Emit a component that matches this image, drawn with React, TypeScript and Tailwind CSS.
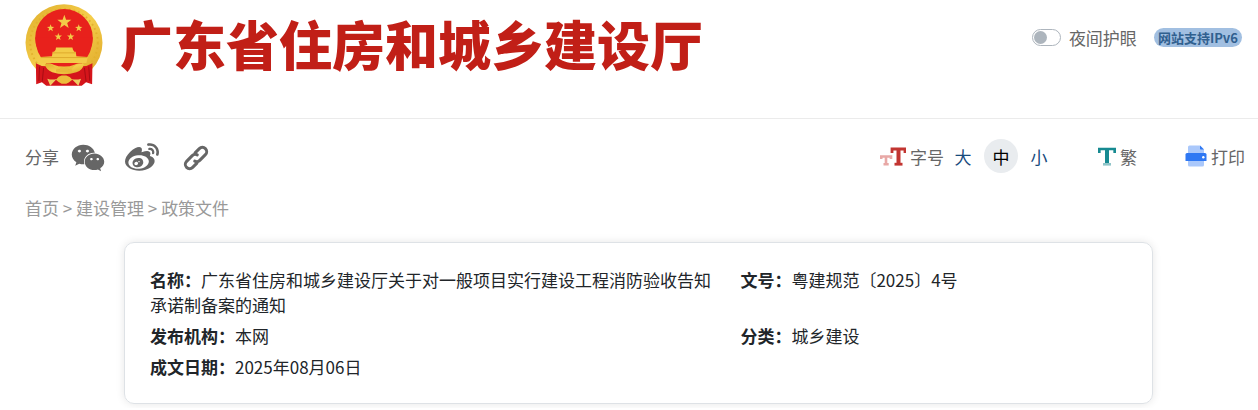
import { useState } from "react";
import { FaWeibo, FaWeixin } from "react-icons/fa";

const sizes = ["大", "中", "小"];

const crumbs = ["首页", "建设管理", "政策文件"];

const info = [
  { label: "名称：", value: "广东省住房和城乡建设厅关于对一般项目实行建设工程消防验收告知承诺制备案的通知" },
  { label: "文号：", value: "粤建规范〔2025〕4号" },
  { label: "发布机构：", value: "本网" },
  { label: "分类：", value: "城乡建设" },
  { label: "成文日期：", value: "2025年08月06日" },
];

const STAR = "M0 -10 L2.4 -3.2 L9.5 -3.1 L3.9 1.3 L5.9 8.1 L0 4.1 L-5.9 8.1 L-3.9 1.3 L-9.5 -3.1 L-2.4 -3.2Z";
const LINK = "M3 -4.3 H9 a4.3 4.3 0 0 1 0 8.6 H1 a4.3 4.3 0 0 1 -4.1 -3";

function Emblem() {
  return (
    <svg viewBox="45 10 232 248" className="h-[83px] w-[78px] shrink-0" role="img" aria-label="国徽">
      <defs>
        <linearGradient id="gold" x1="0" y1="0" x2="1" y2="1">
          <stop offset="0" stopColor="#dfae2c" />
          <stop offset="0.5" stopColor="#f5ce4b" />
          <stop offset="1" stopColor="#dda526" />
        </linearGradient>
      </defs>
      <circle cx="161" cy="126" r="115" fill="url(#gold)" />
      <circle cx="161" cy="126" r="101" fill="none" stroke="#e3b12d" strokeWidth="6" strokeDasharray="5 9" />
      <circle cx="161" cy="111" r="86" fill="#e8211c" />
      <path d="M75 110 Q76 160 108 188 L214 188 Q246 160 247 110Z" fill="#e8211c" />
      <g fill="#f3cb48">
        <path d={STAR} transform="translate(162 64) scale(2.2)" />
        <path d={STAR} transform="translate(121 82) scale(1.15)" />
        <path d={STAR} transform="translate(205 82) scale(1.15)" />
        <path d={STAR} transform="translate(144 108) scale(1.15)" />
        <path d={STAR} transform="translate(181 108) scale(1.15)" />
        <path d="M137 140 L186 140 L188 147 L193 155 L130 155 L136 147Z" />
        <path d="M127 153 L196 153 L198 166 L232 168 L228 186 L94 186 L90 168 L125 166Z" />
      </g>
      <path d="M127 156 H196 M92 170 H230" stroke="#d39b20" strokeWidth="2" />
      <path d="M77 187 Q92 197 111 196 Q128 206 161 207 Q194 206 212 196 Q230 197 246 187 L245 250 L227 244 L214 254 L108 254 L95 244 L78 250Z" fill="#d5151b" />
      <path d="M88 197 L86 240 M100 201 L96 242 M222 201 L227 242 M235 197 L238 240" stroke="#a90d14" strokeWidth="3" />
      <path d="M104 189 Q124 184 137 203 Q161 219 185 203 Q200 184 220 189 Q218 207 198 214 Q161 226 126 214 Q107 206 104 189Z" fill="url(#gold)" />
      <path d="M138 214 Q134 200 147 205 Q151 194 161 201 Q171 194 175 205 Q188 200 184 214Z" fill="#e9b939" />
      <path d="M137 236 L145 227 L154 224 L168 224 L178 228 L186 236 L176 244 L168 248 L154 248 L145 243Z" fill="#edbd3c" />
      <path d="M111 233 Q125 238 139 234 L120 254Z M212 233 Q198 238 184 234 L204 254Z" fill="#f0cb60" />
    </svg>
  );
}

function ChainIcon() {
  return (
    <svg viewBox="-13 -13 26 26" className="h-[26px] w-[26px]" fill="none" stroke="#666" strokeWidth="3" strokeLinecap="round" aria-hidden="true">
      <path d={LINK} transform="rotate(-45)" />
      <path d={LINK} transform="rotate(135)" />
    </svg>
  );
}

function FontSizeIcon() {
  return (
    <svg viewBox="0 0 26 19" className="h-[19px] w-[26px]" fill="none" aria-hidden="true">
      <path d="M1.2 12 V9.5 H11 V12 M6 9.5 V17 M3.5 17.2 H8.7" stroke="#e8a8a6" strokeWidth="2.6" />
      <path d="M12 6 V2 H25 V6" stroke="#c23531" strokeWidth="2.8" />
      <path d="M18.5 2 V17" stroke="#c23531" strokeWidth="4" />
      <path d="M14.5 17.2 H22.5" stroke="#c23531" strokeWidth="2.8" />
    </svg>
  );
}

function TraditionalIcon() {
  return (
    <svg viewBox="0 0 18 19" className="h-[19px] w-[18px]" fill="none" aria-hidden="true">
      <path d="M1.3 6 V2 H16.7 V6" stroke="#178a91" strokeWidth="2.7" />
      <path d="M9 2 V16" stroke="#178a91" strokeWidth="4" />
      <path d="M5 17.3 H13" stroke="#90c5c9" strokeWidth="2.6" />
    </svg>
  );
}

function PrintIcon() {
  return (
    <svg viewBox="0 0 22 22" className="h-[22px] w-[22px]" aria-hidden="true">
      <path d="M4.5 0.5 H15 L19 4.5 V10 H3 V2 Q3 0.5 4.5 0.5Z" fill="#aac8fb" />
      <path d="M15 0.5 L19 4.5 H15.8 Q15 4.5 15 3.7Z" fill="#2f78f3" />
      <path d="M2 8 H20 Q21.5 8 21.5 9.5 V16 H0.5 V9.5 Q0.5 8 2 8Z" fill="#2f78f3" />
      <path d="M3 16 H19 V20 Q19 21.5 17.5 21.5 H4.5 Q3 21.5 3 20Z" fill="#aac8fb" />
      <circle cx="18.3" cy="12.3" r="1.2" fill="#fff" />
    </svg>
  );
}

export default function App() {
  const [night, setNight] = useState(false);
  const [size, setSize] = useState("中");

  return (
    <div className="bg-white pb-1 font-['Noto_Sans_CJK_SC',sans-serif] text-[17px] leading-[25px] text-[#212529]">
      <header className="flex h-[119px] items-start justify-between border-b border-[#ebebeb] pr-4 pl-[25px]">
        <div className="flex items-start gap-[17px] pt-1">
          <Emblem />
          <h1 className="text-[53px] leading-[78px] font-black whitespace-nowrap text-[#c11f17]">广东省住房和城乡建设厅</h1>
        </div>
        <div className="flex items-center gap-[17px] pt-[25px] whitespace-nowrap">
          <label className="flex items-center gap-2 text-[#666]">
            <input
              type="checkbox"
              checked={night}
              onChange={() => setNight(!night)}
              className="flex h-[17px] w-[29px] appearance-none items-center rounded-full border border-[#adb5bd] bg-white px-px before:h-[13px] before:w-[13px] before:rounded-full before:bg-[#adb5bd] checked:justify-end"
            />
            夜间护眼
          </label>
          <a href="#ipv6" className="rounded-full bg-[#a1bfe1] px-1 text-[13px] leading-[19px] font-bold text-[#30608f]">
            网站支持IPv6
          </a>
        </div>
      </header>

      <div className="flex items-center justify-between pt-[18px] pr-[13px] pl-[25px] whitespace-nowrap text-[#666]">
        <div className="flex items-center">
          <span>分享</span>
          <div className="flex items-center pt-1 pl-3">
            <button type="button" aria-label="分享到微信">
              <FaWeixin size={34} color="#666" />
            </button>
            <button type="button" aria-label="分享到微博" className="ml-5">
              <FaWeibo size={34} color="#666" />
            </button>
            <button type="button" aria-label="复制链接" className="ml-6">
              <ChainIcon />
            </button>
          </div>
        </div>
        <div className="flex items-center">
          <div className="flex items-center gap-1">
            <FontSizeIcon />
            <span>字号</span>
          </div>
          <div className="flex items-center">
            {sizes.map((s) => (
              <button
                key={s}
                type="button"
                onClick={() => setSize(s)}
                className={`mx-[2px] h-[34px] w-[34px] rounded-full ${s === size ? "bg-[#e9ecef] text-black" : "text-[#174a7c]"}`}
              >
                {s}
              </button>
            ))}
          </div>
          <button type="button" className="ml-10 flex items-center gap-1">
            <TraditionalIcon />
            繁
          </button>
          <button type="button" className="ml-12 flex items-center gap-1">
            <PrintIcon />
            打印
          </button>
        </div>
      </div>

      <nav className="px-[25px] pt-5 text-[#999]">
        {crumbs.map((c, i) => (
          <span key={c}>
            {i > 0 && " > "}
            <a href="#crumb">{c}</a>
          </span>
        ))}
      </nav>

      <dl className="mt-[22px] mr-[105px] ml-[124px] grid grid-cols-[3fr_2fr] gap-y-[6px] rounded-[10px] border border-[#dee2e6] py-6 pr-[18px] pl-[25px] shadow-[0_0_8px_rgba(0,0,0,0.1)]">
        {info.map((item) => (
          <div key={item.label} className="pr-6">
            <dt className="inline font-bold">{item.label}</dt>
            <dd className="inline">{item.value}</dd>
          </div>
        ))}
      </dl>
    </div>
  );
}
